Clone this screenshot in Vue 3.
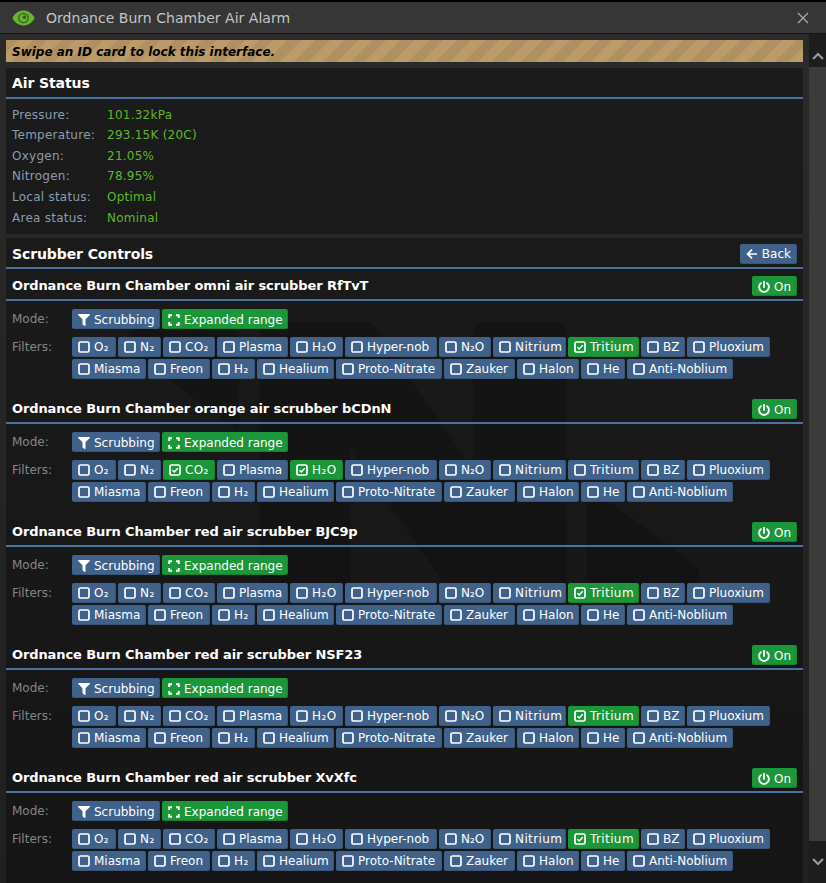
<script setup>
const status = [
  ['Pressure:', '101.32kPa'],
  ['Temperature:', '293.15K (20C)'],
  ['Oxygen:', '21.05%'],
  ['Nitrogen:', '78.95%'],
  ['Local status:', 'Optimal'],
  ['Area status:', 'Nominal'],
]
const filters = [
  { label: 'O₂', width: 44, wide: true },
  { label: 'N₂', width: 43, wide: true },
  { label: 'CO₂', width: 52, wide: true },
  { label: 'Plasma', width: 71 },
  { label: 'H₂O', width: 53, wide: true },
  { label: 'Hyper-nob', width: 92 },
  { label: 'N₂O', width: 52 },
  { label: 'Nitrium', width: 73, wide: true },
  { label: 'Tritium', width: 71, wide: true },
  { label: 'BZ', width: 44 },
  { label: 'Pluoxium', width: 83 },
  { label: 'Miasma', width: 74 },
  { label: 'Freon', width: 62 },
  { label: 'H₂', width: 43, wide: true },
  { label: 'Healium', width: 77 },
  { label: 'Proto-Nitrate', width: 106 },
  { label: 'Zauker', width: 71 },
  { label: 'Halon', width: 62 },
  { label: 'He', width: 44 },
  { label: 'Anti-Noblium', width: 106 },
]
const scrubbers = [
  { name: 'Ordnance Burn Chamber omni air scrubber RfTvT', on: ['Tritium'] },
  { name: 'Ordnance Burn Chamber orange air scrubber bCDnN', on: ['CO₂', 'H₂O'] },
  { name: 'Ordnance Burn Chamber red air scrubber BJC9p', on: ['Tritium'] },
  { name: 'Ordnance Burn Chamber red air scrubber NSF23', on: ['Tritium'] },
  { name: 'Ordnance Burn Chamber red air scrubber XvXfc', on: ['Tritium'] },
]
</script>

<template>
  <div class="window">
    <header class="titlebar">
      <svg class="eye" viewBox="0 0 24 16">
        <path class="eye-lens" d="M0.4 8C3 3 7.2 0.2 12 0.2S21 3 23.6 8C21 13 16.8 15.8 12 15.8S3 13 0.4 8Z" />
        <circle class="eye-ring" cx="12" cy="8" r="5.6" />
        <circle class="eye-lens" cx="12" cy="8" r="4.2" />
        <circle class="eye-ring" cx="13" cy="7" r="2" />
      </svg>
      <span class="window-title">Ordnance Burn Chamber Air Alarm</span>
      <svg class="close" viewBox="0 0 12 12"><path d="M1 1L11 11M11 1L1 11" /></svg>
    </header>
    <div class="body">
      <svg class="logo" viewBox="0 0 425 200">
        <path d="m178 0h-71.2a6.76 6 0 0 0-6.76 6v188a6.76 6 0 0 0 6.76 6h53.1a6.76 6 0 0 0 6.76-6v-101.5l72.2 104.6a6.76 6 0 0 0 5.57 2.9h73.55a6.76 6 0 0 0 6.76-6v-188a6.76 6 0 0 0-6.76-6h-54.7a6.76 6 0 0 0-6.76 6v102.6l-72.2-105.7a6.76 6 0 0 0-5.57-2.9z" />
        <path d="M9 5H78a7 7 0 0 1 7 7V80L6 22C0 17 2 5 9 5Z" />
        <path d="M416 195H347a7 7 0 0 1-7-7V120L419 178C425 183 423 195 416 195Z" />
      </svg>
      <main class="content">
        <div class="notice">Swipe an ID card to lock this interface.</div>
        <section class="section status">
          <h2 class="section-title">Air Status</h2>
          <dl class="status-list">
            <div v-for="row in status" :key="row[0]" class="status-row">
              <dt>{{ row[0] }}</dt>
              <dd>{{ row[1] }}</dd>
            </div>
          </dl>
        </section>
        <section class="section controls">
          <div class="section-title with-action">
            <h2>Scrubber Controls</h2>
            <button class="btn">
              <svg class="icon" viewBox="0 0 12 12"><path class="stroke" d="M11 6H2M6 1.6L1.6 6L6 10.4" /></svg>Back
            </button>
          </div>
          <article v-for="s in scrubbers" :key="s.name" class="scrubber">
            <div class="scrubber-head">
              <h3>{{ s.name }}</h3>
              <button class="btn green nudge">
                <svg class="icon" viewBox="0 0 512 512"><path class="solid" d="M400 54.1c63 45 104 118.6 104 201.9 0 136.8-110.8 247.7-247.5 248C120 504.3 8.2 393 8 256.4 7.9 173.1 48.9 99.3 111.8 54.2c11.7-8.3 28-4.8 35 7.7L162.6 90c5.9 10.5 3.1 23.8-6.6 31-41.5 30.8-68 79.6-68 134.9-.1 92.3 74.5 168.1 168 168.1 91.6 0 168.6-74.2 168-169.1-.3-51.8-24.7-101.8-68.1-134-9.7-7.2-12.4-20.5-6.5-30.9l15.8-28.1c7-12.4 23.2-16.1 34.8-7.8zM296 264V24c0-13.3-10.7-24-24-24h-32c-13.3 0-24 10.7-24 24v240c0 13.3 10.7 24 24 24h32c13.3 0 24-10.7 24-24z" /></svg>On
              </button>
            </div>
            <div class="scrubber-body">
              <span class="field-label nudge">Mode:</span>
              <div class="buttons">
                <button class="btn mode-a nudge">
                  <svg class="icon" viewBox="0 0 512 512"><path class="solid" d="M487.976 0H24.028C2.71 0-8.047 25.866 7.058 40.971L192 225.941V432c0 7.831 3.821 15.17 10.237 19.662l80 55.98C298.02 518.69 320 507.493 320 487.98V225.941l184.947-184.97C520.021 25.896 509.338 0 487.976 0z" /></svg>Scrubbing
                </button>
                <button class="btn green mode-b nudge">
                  <svg class="icon" viewBox="0 0 12 12"><path class="stroke thick" d="M1.2 4V1.2H4M8 1.2H10.8V4M10.8 8V10.8H8M4 10.8H1.2V8" /></svg>Expanded range
                </button>
              </div>
              <span class="field-label">Filters:</span>
              <div class="buttons">
                <button
                  v-for="f in filters"
                  :key="f.label"
                  class="btn"
                  :class="{ green: s.on.includes(f.label), wide: f.wide }"
                  :style="{ width: f.width + 'px' }"
                >
                  <svg class="icon" viewBox="0 0 12 12">
                    <rect class="stroke" x="1" y="1" width="10" height="10" rx="1.6" />
                    <path v-if="s.on.includes(f.label)" class="check" d="M3.4 6.2L5.3 8L8.7 4.2" />
                  </svg>{{ f.label }}
                </button>
              </div>
            </div>
          </article>
        </section>
      </main>
      <aside class="scrollbar">
        <div class="arrow top"><svg viewBox="0 0 12 8"><path d="M1 7L6 2L11 7" /></svg></div>
        <div class="thumb"></div>
        <div class="arrow bottom"><svg viewBox="0 0 12 8"><path d="M1 1L6 6L11 1" /></svg></div>
      </aside>
    </div>
  </div>
</template>

<style scoped>
.window {
  width: 826px;
  height: 883px;
  display: flex;
  flex-direction: column;
  overflow: hidden;
  font-family: "DejaVu Sans", Verdana, sans-serif;
  font-size: 12px;
  color: #fff;
  background: #000;
}
.titlebar {
  flex: none;
  height: 31px;
  margin-top: 2px;
  display: flex;
  align-items: center;
  padding: 0 17px 0 12px;
  background: #363636;
  border-bottom: 1px solid #161616;
}
.eye { width: 23px; height: 16px; flex: none; }
.eye-lens { fill: #62b82a; }
.eye-ring { fill: #3c5a2c; }
.window-title {
  margin-left: 11px;
  font-size: 14px;
  letter-spacing: 0.03px;
  color: #c4c4c4;
  flex: 1;
}
.close { width: 12px; height: 12px; }
.close path { fill: none; stroke: #a0a8ad; stroke-width: 1.4; }
.body {
  flex: 1;
  min-height: 0;
  position: relative;
  display: flex;
  background: linear-gradient(to bottom, #2a2a2a, #202020);
}
.logo {
  position: absolute;
  left: 123px;
  top: 288px;
  width: 580px;
  height: 273px;
}
.logo path { fill: #000; opacity: 0.18; }
.content {
  position: relative;
  flex: 1;
  min-width: 0;
  padding: 6px 6px 0;
  display: flex;
  flex-direction: column;
  gap: 6px;
}
.notice {
  height: 22px;
  padding: 1px 0 0 6px;
  box-sizing: border-box;
  line-height: 22px;
  color: #000;
  font-weight: bold;
  font-style: italic;
  background-color: #bb9b68;
  background-image: repeating-linear-gradient(-45deg, transparent, transparent 10px, rgba(0, 0, 0, 0.07) 10px, rgba(0, 0, 0, 0.07) 20px);
}
.section { background: rgba(0, 0, 0, 0.33); }
.status { height: 166px; flex: none; }
.controls { margin-top: -2px; flex: 1; }
.section-title {
  margin: 0;
  padding: 5px 6px 4px;
  line-height: 20px;
  font-size: 14px;
  font-weight: bold;
  letter-spacing: -0.1px;
  color: #fff;
  border-bottom: 2px solid #4972a1;
}
.with-action {
  display: flex;
  justify-content: space-between;
  padding: 6px 6px 3px;
}
.with-action h2 { margin: 0; font: inherit; }
.status-list { margin: 0; padding: 5.7px 6px 0; }
.status-row {
  display: grid;
  grid-template-columns: 95px 1fr;
  height: 20.6px;
  line-height: 20.6px;
  letter-spacing: 0.25px;
}
.status-row dt { color: #8b9bb0; }
.status-row dd { margin: 0; color: #5fb82a; }
.scrubber-head {
  display: flex;
  justify-content: space-between;
  padding: 7px 6px 3px;
  border-bottom: 2px solid #4972a1;
}
.scrubber-head h3 {
  margin: 0;
  font-size: 13px;
  line-height: 20px;
  font-weight: bold;
  letter-spacing: -0.1px;
  color: #fff;
}
.scrubber-body {
  display: grid;
  grid-template-columns: 60px 1fr;
  row-gap: 8px;
  padding: 8px 6px 13px;
}
.field-label { line-height: 20px; color: #858585; }
.field-label.nudge { padding-top: 1px; line-height: 19px; }
.buttons { display: flex; flex-wrap: wrap; gap: 2px; }
.btn {
  display: inline-flex;
  align-items: center;
  box-sizing: border-box;
  height: 20px;
  padding: 0 6px;
  border: 0;
  border-radius: 2px;
  font-family: inherit;
  font-size: 12px;
  font-weight: normal;
  letter-spacing: 0;
  line-height: 20px;
  color: #fff;
  white-space: nowrap;
  background: #40628a;
  box-shadow: inset -1px -1px 0 rgba(0, 0, 0, 0.12);
}
.btn.nudge { padding-top: 1px; }
.btn.green { background: #1b9638; }
.btn.wide { letter-spacing: 0.4px; }
.mode-a { width: 88px; }
.mode-b { width: 126px; }
.icon { width: 12px; height: 12px; margin-right: 4px; flex: none; }
.solid { fill: #fff; }
.stroke { fill: none; stroke: #fff; stroke-width: 1.7; }
.thick { stroke-width: 2; }
.check { fill: none; stroke: #fff; stroke-width: 1.5; }
.scrollbar {
  position: relative;
  width: 17px;
  flex: none;
  display: flex;
  flex-direction: column;
}
.arrow {
  display: flex;
  align-items: center;
  justify-content: center;
  background: #1d1d1d;
  flex: none;
}
.arrow svg { width: 12px; height: 8px; }
.arrow path { fill: none; stroke: #9a9a9a; stroke-width: 2.2; }
.top { height: 33px; padding-top: 10px; box-sizing: border-box; }
.bottom { height: 42px; }
.thumb { flex: 1; background: #3b3b3b; }
</style>
